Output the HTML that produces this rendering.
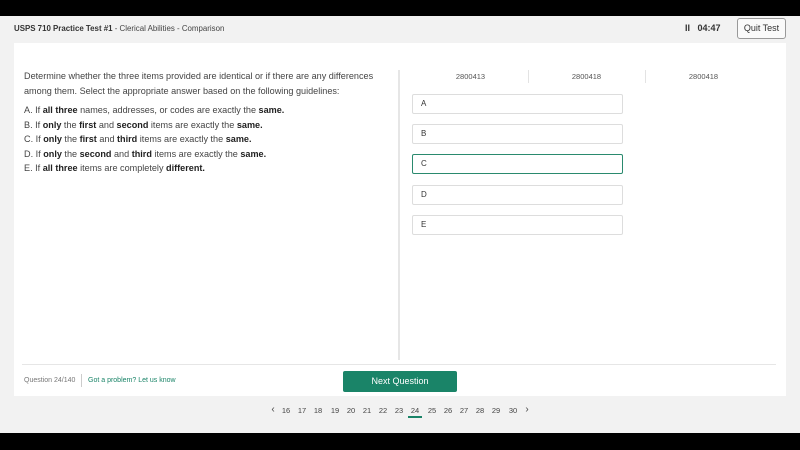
<!DOCTYPE html>
<html><head><style>
*{margin:0;padding:0;box-sizing:border-box}
body{width:800px;height:450px;background:#f2f2f2;font-family:"Liberation Sans",sans-serif;position:relative;overflow:hidden;color:#333}
.blk{position:absolute;left:0;width:800px;background:#000}
.abs{position:absolute}
.card{position:absolute;left:14px;top:43px;width:772px;height:353px;background:#fff}
.opt{position:absolute;left:412px;width:211px;height:20px;border:1px solid #ddd;border-radius:2px;font-size:8px;padding-left:8px;line-height:18px;color:#333}
.q{font-size:9.1px;line-height:14.5px;color:#444}
.q b{color:#222}
.pg span{position:absolute;top:406px;font-size:7.5px;color:#444;width:16px;text-align:center}
</style></head><body>
<div class="blk" style="top:0;height:16px"></div>
<div class="blk" style="top:433px;height:17px"></div>
<div class="abs" style="left:14px;top:24px;font-size:7.9px;color:#444"><b style="color:#333">USPS 710 Practice Test #1</b> - Clerical Abilities - Comparison</div>
<div class="abs" style="left:685px;top:23px;font-size:9px;font-weight:bold;color:#333">II&nbsp;&nbsp;&nbsp;04:47</div>
<div class="abs" style="left:737px;top:18px;width:49px;height:21px;border:1px solid #999;border-radius:3px;background:#fafafa;font-size:9px;text-align:center;line-height:19px;color:#333">Quit Test</div>
<div class="card"></div>
<div class="abs q" style="left:24px;top:69px;width:372px">Determine whether the three items provided are identical or if there are any differences among them. Select the appropriate answer based on the following guidelines:</div>
<div class="abs q" style="left:24px;top:103px">A. If <b>all three</b> names, addresses, or codes are exactly the <b>same.</b><br>B. If <b>only</b> the <b>first</b> and <b>second</b> items are exactly the <b>same.</b><br>C. If <b>only</b> the <b>first</b> and <b>third</b> items are exactly the <b>same.</b><br>D. If <b>only</b> the <b>second</b> and <b>third</b> items are exactly the <b>same.</b><br>E. If <b>all three</b> items are completely <b>different.</b></div>
<div class="abs" style="left:398px;top:70px;width:2px;height:290px;background:#e6e6e6"></div>
<div class="abs" style="left:528px;top:70px;width:1px;height:13px;background:#e3e3e3"></div>
<div class="abs" style="left:645px;top:70px;width:1px;height:13px;background:#e3e3e3"></div>
<div class="abs" style="left:412px;top:72px;width:117px;text-align:center;font-size:7.5px;color:#555">2800413</div>
<div class="abs" style="left:528px;top:72px;width:117px;text-align:center;font-size:7.5px;color:#555">2800418</div>
<div class="abs" style="left:645px;top:72px;width:117px;text-align:center;font-size:7.5px;color:#555">2800418</div>
<div class="opt" style="top:94px">A</div>
<div class="opt" style="top:124px">B</div>
<div class="opt" style="top:154px;border-color:#2a8a6e">C</div>
<div class="opt" style="top:185px">D</div>
<div class="opt" style="top:215px">E</div>
<div class="abs" style="left:22px;top:364px;width:754px;height:1px;background:#e6e6e6"></div>
<div class="abs" style="left:24px;top:377px;font-size:7px;color:#777">Question 24/140</div>
<div class="abs" style="left:81px;top:374px;width:1px;height:13px;background:#ccc"></div>
<div class="abs" style="left:88px;top:377px;font-size:7px;color:#1a8468">Got a problem? Let us know</div>
<div class="abs" style="left:343px;top:371px;width:114px;height:21px;background:#1a8468;border-radius:2px;color:#fff;font-size:9px;text-align:center;line-height:21px">Next Question</div>
<div class="pg">
<span style="left:265px;font-size:10px;top:404px">‹</span>
<span style="left:278px">16</span><span style="left:294px">17</span><span style="left:310px">18</span><span style="left:327px">19</span><span style="left:343px">20</span><span style="left:359px">21</span><span style="left:375px">22</span><span style="left:391px">23</span><span style="left:407px">24</span><span style="left:424px">25</span><span style="left:440px">26</span><span style="left:456px">27</span><span style="left:472px">28</span><span style="left:488px">29</span><span style="left:505px">30</span>
<span style="left:519px;font-size:10px;top:404px">›</span>
</div>
<div class="abs" style="left:408px;top:416px;width:14px;height:2px;background:#1a8468"></div>
</body></html>
